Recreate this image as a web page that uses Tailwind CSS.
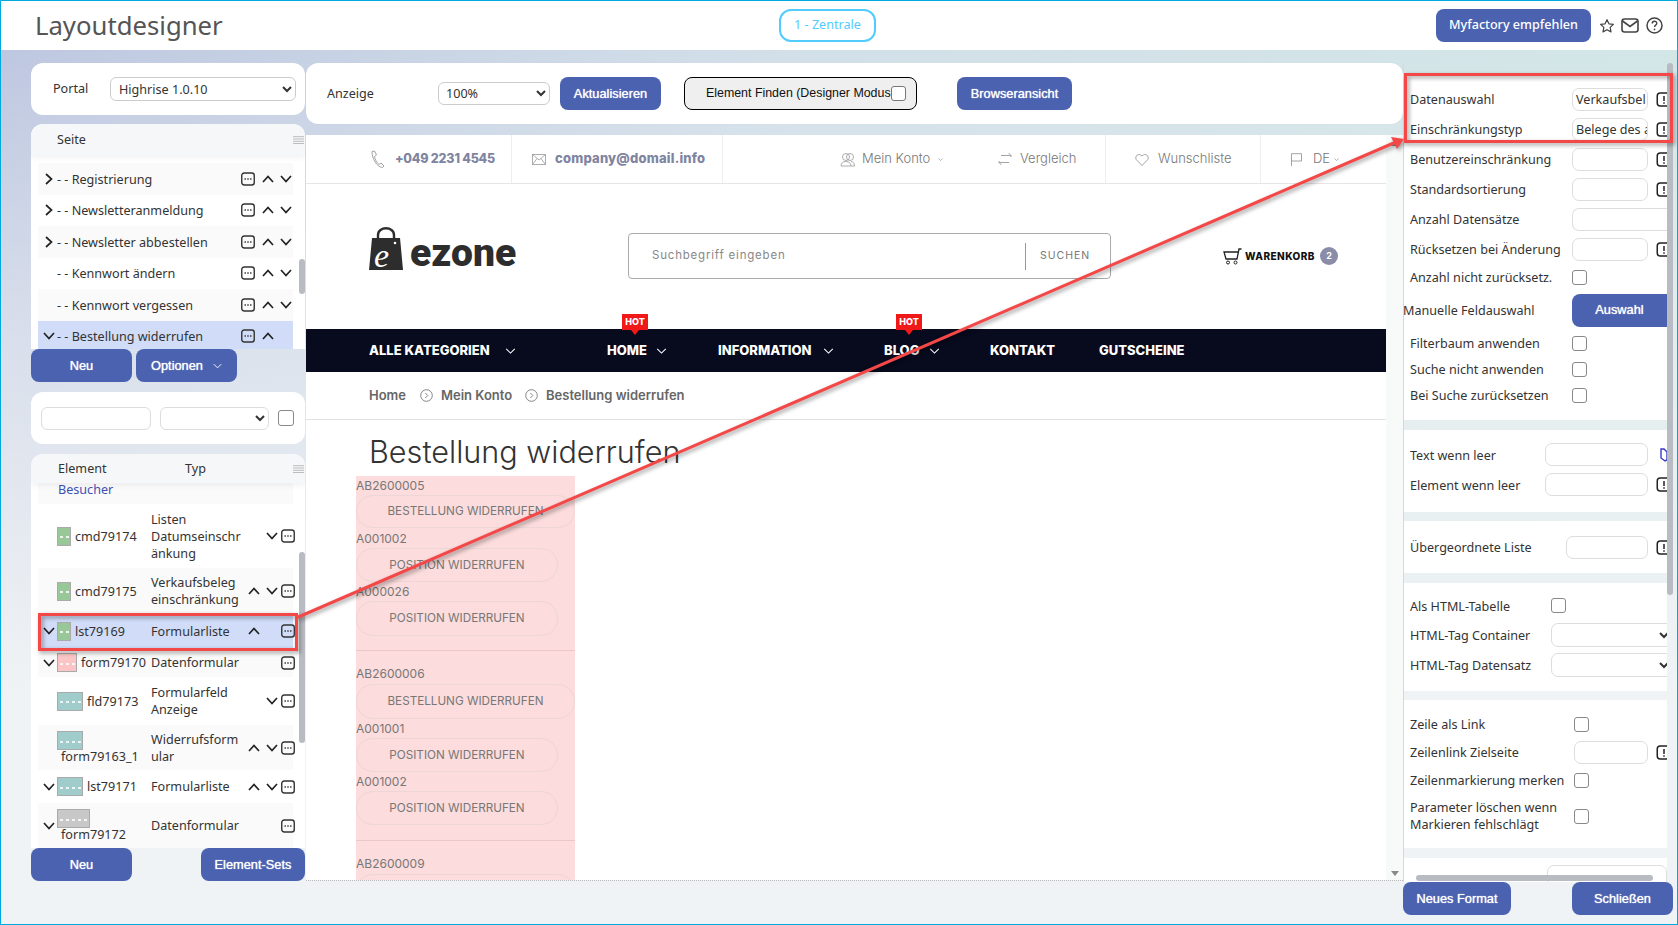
<!DOCTYPE html>
<html lang="de">
<head>
<meta charset="utf-8">
<title>Layoutdesigner</title>
<script src="https://cdn.jsdelivr.net/npm/@tailwindcss/browser@4"></script>
</head>
<body class="relative w-[1678px] h-[925px] overflow-hidden border border-[#00a8e0] font-['Noto_Sans',sans-serif] text-[12.6px] text-[#333] bg-[linear-gradient(to_bottom,rgba(240,243,245,0)_0%,rgba(240,243,245,0.55)_35%,#f0f3f5_75%),linear-gradient(to_right,#b9c3de_0%,#cfdde8_45%,#d0e5e5_100%)]">
<svg class="absolute w-0 h-0">
  <defs>
    <symbol id="up" viewBox="0 0 12 8"><path d="M1 7 6 1.5 11 7" fill="none" stroke="#222" stroke-width="1.7"/></symbol>
    <symbol id="down" viewBox="0 0 12 8"><path d="M1 1 6 6.5 11 1" fill="none" stroke="#222" stroke-width="1.7"/></symbol>
    <symbol id="right" viewBox="0 0 8 12"><path d="M1 1 6.5 6 1 11" fill="none" stroke="#222" stroke-width="1.7"/></symbol>
    <symbol id="dots" viewBox="0 0 14 14"><rect x=".75" y="1" width="12.5" height="12" rx="2.5" fill="none" stroke="#333" stroke-width="1.4"/><path d="M3.5 7h1.4M6.3 7h1.4M9.1 7h1.4" stroke="#333" stroke-width="1.5"/></symbol>
    <symbol id="bang" viewBox="0 0 14 15"><rect x=".75" y="1" width="14" height="13" rx="3" fill="none" stroke="#222" stroke-width="1.5"/><path d="M7.5 4v5M7.5 10.2v1.6" stroke="#222" stroke-width="1.5"/></symbol>
    <symbol id="menu" viewBox="0 0 11 8"><path d="M0 .7h11M0 3h11M0 5.3h11M0 7.500h11" stroke="#bcbcbc" stroke-width="1"/></symbol>
    <symbol id="navdown" viewBox="0 0 12 7"><path d="M1 1 6 6 11 1" fill="none" stroke="#fff" stroke-width="1.200"/></symbol>
    <symbol id="crumb" viewBox="0 0 13 13"><circle cx="6.500" cy="6.500" r="5.800" fill="none" stroke="#777" stroke-width=".9"/><path d="M5.300 4 7.800 6.500 5.300 9" fill="none" stroke="#777" stroke-width=".9"/></symbol>
  </defs>
</svg>

<header class="flex items-center h-[49px] bg-white pl-[34px]">
  <h1 class="w-[744px] text-[25.7px] leading-none text-[#555] font-normal">Layoutdesigner</h1>
  <div class="flex items-center justify-center w-[97px] h-[33px] rounded-[12px] border-2 border-[#52ccff] text-[#52ccff] text-[12.6px]">1 - Zentrale</div>
  <button class="ml-[560px] w-[155px] h-[33px] rounded-[8px] bg-[#4a62b0] text-white text-[12.6px] font-medium">Myfactory empfehlen</button>
  <svg class="ml-[8px] w-[16px] h-[16px]" viewBox="0 0 24 24"><path d="M12 2.500l2.900 6.200 6.700.8-4.900 4.600 1.300 6.700L12 17.500l-6 3.300 1.300-6.700L2.400 9.500l6.700-.8z" fill="none" stroke="#444" stroke-width="1.800" stroke-linejoin="round"/></svg>
  <svg class="ml-[6px] w-[18px] h-[15px]" viewBox="0 0 18 15"><rect x="1" y="1" width="16" height="13" rx="2.500" fill="none" stroke="#444" stroke-width="1.600"/><path d="M1.500 3 9 8.500 16.500 3" fill="none" stroke="#444" stroke-width="1.600"/></svg>
  <svg class="ml-[7px] w-[17px] h-[17px]" viewBox="0 0 17 17"><circle cx="8.500" cy="8.500" r="7.500" fill="none" stroke="#444" stroke-width="1.500"/><path d="M6.200 6.500c0-3 4.600-3 4.600-.2 0 1.900-2.300 1.800-2.300 3.700" fill="none" stroke="#444" stroke-width="1.400"/><circle cx="8.500" cy="12.400" r=".9" fill="#444"/></svg>
</header>

<main class="flex pl-[30px] pt-[13px]">
  <!-- linke Spalte -->
  <aside class="w-[274px] mr-px flex flex-col">
    <div class="flex items-center h-[52px] bg-white rounded-[12px] pl-[22px]">
      <span class="w-[57px]">Portal</span>
      <select class="w-[186px] h-[24px] pl-[4px] border border-[#ccc] rounded-[6px] bg-white text-[12.6px] text-[#333]"><option>Highrise 1.0.10</option></select>
    </div>

    <div class="mt-[9px] h-[225px] bg-white rounded-t-[12px] flex flex-col overflow-hidden">
      <div class="relative z-10 flex items-center h-[31px] bg-[#f6f7f8] shadow-[0_3px_5px_rgba(0,0,0,0.05)] pl-[26px] pr-[1px] shrink-0">
        <span class="flex-1 pt-[2px]">Seite</span>
        <svg class="w-[11px] h-[8px]"><use href="#menu"/></svg>
      </div>
      <div class="flex flex-1 min-h-0">
        <div class="ml-[7px] w-[255px] pt-[8px] bg-white overflow-hidden">
          <div class="flex items-center h-[31.500px] bg-[#fafafa]"><span class="w-[19px] pl-[7px]"><svg class="w-[8px] h-[12px]"><use href="#right"/></svg></span><span class="w-[184px] whitespace-nowrap pt-[3px]">- - Registrierung</span><svg class="w-[14px] h-[14px]"><use href="#dots"/></svg><svg class="ml-[7px] w-[12px] h-[8px]"><use href="#up"/></svg><svg class="ml-[6px] w-[12px] h-[8px]"><use href="#down"/></svg></div>
          <div class="flex items-center h-[31.500px]"><span class="w-[19px] pl-[7px]"><svg class="w-[8px] h-[12px]"><use href="#right"/></svg></span><span class="w-[184px] whitespace-nowrap pt-[3px]">- - Newsletteranmeldung</span><svg class="w-[14px] h-[14px]"><use href="#dots"/></svg><svg class="ml-[7px] w-[12px] h-[8px]"><use href="#up"/></svg><svg class="ml-[6px] w-[12px] h-[8px]"><use href="#down"/></svg></div>
          <div class="flex items-center h-[31.500px] bg-[#fafafa]"><span class="w-[19px] pl-[7px]"><svg class="w-[8px] h-[12px]"><use href="#right"/></svg></span><span class="w-[184px] whitespace-nowrap pt-[3px]">- - Newsletter abbestellen</span><svg class="w-[14px] h-[14px]"><use href="#dots"/></svg><svg class="ml-[7px] w-[12px] h-[8px]"><use href="#up"/></svg><svg class="ml-[6px] w-[12px] h-[8px]"><use href="#down"/></svg></div>
          <div class="flex items-center h-[31.500px]"><span class="w-[19px]"></span><span class="w-[184px] whitespace-nowrap pt-[3px]">- - Kennwort ändern</span><svg class="w-[14px] h-[14px]"><use href="#dots"/></svg><svg class="ml-[7px] w-[12px] h-[8px]"><use href="#up"/></svg><svg class="ml-[6px] w-[12px] h-[8px]"><use href="#down"/></svg></div>
          <div class="flex items-center h-[31.500px] bg-[#fafafa]"><span class="w-[19px]"></span><span class="w-[184px] whitespace-nowrap pt-[3px]">- - Kennwort vergessen</span><svg class="w-[14px] h-[14px]"><use href="#dots"/></svg><svg class="ml-[7px] w-[12px] h-[8px]"><use href="#up"/></svg><svg class="ml-[6px] w-[12px] h-[8px]"><use href="#down"/></svg></div>
          <div class="flex items-center h-[31.500px] bg-[#d0dcf8]"><span class="w-[19px] pl-[5px]"><svg class="w-[12px] h-[8px]"><use href="#down"/></svg></span><span class="w-[184px] whitespace-nowrap pt-[3px]">- - Bestellung widerrufen</span><svg class="w-[14px] h-[14px]"><use href="#dots"/></svg><svg class="ml-[7px] w-[12px] h-[8px]"><use href="#up"/></svg></div>
        </div>
        <div class="ml-[6px] w-[6px]"><div class="mt-[104px] h-[35px] rounded-[3px] bg-[#b8bcc2]"></div></div>
      </div>
    </div>
    <div class="flex gap-[4px]">
      <button class="w-[101px] h-[33px] rounded-[8px] bg-[#4a62b0] text-white font-['Liberation_Sans',sans-serif] text-[12.8px] [text-shadow:0_0_1px_#fff]">Neu</button>
      <button class="flex items-center justify-center gap-[10px] w-[101px] h-[33px] rounded-[8px] bg-[#4a62b0] text-white font-['Liberation_Sans',sans-serif] text-[12.8px] [text-shadow:0_0_1px_#fff]">Optionen <svg class="w-[9px] h-[6px]"><use href="#navdown"/></svg></button>
    </div>

    <div class="mt-[10px] flex items-center h-[52px] bg-white rounded-[12px] pl-[10px]">
      <input class="w-[110px] h-[23px] border border-[#ddd] rounded-[6px] bg-white">
      <select class="ml-[9px] w-[109px] h-[23px] border border-[#ddd] rounded-[6px] bg-white"><option></option></select>
      <input type="checkbox" class="ml-[9px] appearance-none w-[16px] h-[16px] border border-[#888] rounded-[3px] bg-white">
    </div>

    <div class="mt-[10px] h-[394px] bg-white rounded-t-[12px] flex flex-col overflow-hidden">
      <div class="relative z-10 flex items-center h-[29px] bg-[#f6f7f8] shadow-[0_3px_5px_rgba(0,0,0,0.05)] pl-[27px] pr-[1px] shrink-0">
        <span class="w-[127px] pt-[2px]">Element</span><span class="flex-1 pt-[2px]">Typ</span>
        <svg class="w-[11px] h-[8px]"><use href="#menu"/></svg>
      </div>
      <div class="flex flex-1 min-h-0">
        <div class="ml-[7px] w-[255px] leading-[17px] [&>div>*]:shrink-0">
          <div class="h-[21px] bg-[#fafafa] pl-[20px] text-[#4050b0] leading-[14px]">Besucher</div>
          <div class="flex items-center h-[64px]">
            <span class="w-[19px]"></span>
            <span class="w-[94px] flex items-center gap-[4px]"><span class="flex items-center justify-center w-[14px] h-[19px] bg-[#98c898] border border-[#aaa]"><span class="w-[9px] h-[2px] mt-[2px] bg-[repeating-linear-gradient(to_right,rgba(255,255,255,0.8)_0_3px,transparent_3px_6px)]"></span></span>cmd79174</span>
            <span class="w-[97px]">Listen<br>Datumseinschr<br>änkung</span>
            <span class="w-[18px]"></span>
            <svg class="w-[12px] h-[8px]"><use href="#down"/></svg><svg class="ml-[3px] w-[14px] h-[14px]"><use href="#dots"/></svg>
          </div>
          <div class="flex items-center h-[46px] bg-[#fafafa]">
            <span class="w-[19px]"></span>
            <span class="w-[94px] flex items-center gap-[4px]"><span class="flex items-center justify-center w-[14px] h-[19px] bg-[#98c898] border border-[#aaa]"><span class="w-[9px] h-[2px] mt-[2px] bg-[repeating-linear-gradient(to_right,rgba(255,255,255,0.8)_0_3px,transparent_3px_6px)]"></span></span>cmd79175</span>
            <span class="w-[97px]">Verkaufsbeleg einschränkung</span>
            <svg class="w-[12px] h-[8px]"><use href="#up"/></svg><span class="w-[6px]"></span><svg class="w-[12px] h-[8px]"><use href="#down"/></svg><svg class="ml-[3px] w-[14px] h-[14px]"><use href="#dots"/></svg>
          </div>
          <div class="flex items-center h-[34px] bg-[#d0dcf8]">
            <span class="w-[19px] pl-[5px]"><svg class="w-[12px] h-[8px]"><use href="#down"/></svg></span>
            <span class="w-[94px] flex items-center gap-[4px]"><span class="flex items-center justify-center w-[14px] h-[19px] bg-[#98c898] border border-[#aaa]"><span class="w-[9px] h-[2px] mt-[2px] bg-[repeating-linear-gradient(to_right,rgba(255,255,255,0.8)_0_3px,transparent_3px_6px)]"></span></span>lst79169</span>
            <span class="w-[97px]">Formularliste</span>
            <svg class="w-[12px] h-[8px]"><use href="#up"/></svg><span class="w-[21px]"></span><svg class="w-[14px] h-[14px]"><use href="#dots"/></svg>
          </div>
          <div class="flex items-center h-[29px] bg-[#fafafa]">
            <span class="w-[19px] pl-[5px]"><svg class="w-[12px] h-[8px]"><use href="#down"/></svg></span>
            <span class="w-[94px] flex items-center gap-[4px]"><span class="flex items-center justify-center w-[20px] h-[19px] bg-[#fbc5c5] border border-[#aaa]"><span class="w-[15px] h-[2px] mt-[2px] bg-[repeating-linear-gradient(to_right,rgba(255,255,255,0.8)_0_3px,transparent_3px_6px)]"></span></span>form79170</span>
            <span class="w-[97px]">Datenformular</span>
            <span class="w-[33px]"></span><svg class="w-[14px] h-[14px]"><use href="#dots"/></svg>
          </div>
          <div class="flex items-center h-[48px]">
            <span class="w-[19px]"></span>
            <span class="w-[94px] flex items-center gap-[4px]"><span class="flex items-center justify-center w-[26px] h-[19px] bg-[#a0cccc] border border-[#aaa]"><span class="w-[21px] h-[2px] mt-[2px] bg-[repeating-linear-gradient(to_right,rgba(255,255,255,0.8)_0_3px,transparent_3px_6px)]"></span></span>fld79173</span>
            <span class="w-[97px]">Formularfeld Anzeige</span>
            <span class="w-[18px]"></span>
            <svg class="w-[12px] h-[8px]"><use href="#down"/></svg><svg class="ml-[3px] w-[14px] h-[14px]"><use href="#dots"/></svg>
          </div>
          <div class="flex items-center h-[45px] bg-[#fafafa]">
            <span class="w-[19px]"></span>
            <span class="w-[94px]"><span class="flex items-center justify-center w-[26px] h-[19px] bg-[#a0cccc] border border-[#aaa]"><span class="w-[21px] h-[2px] mt-[2px] bg-[repeating-linear-gradient(to_right,rgba(255,255,255,0.8)_0_3px,transparent_3px_6px)]"></span></span><span class="block pl-[4px] leading-[14px]">form79163_1</span></span>
            <span class="w-[97px]">Widerrufsform<br>ular</span>
            <svg class="w-[12px] h-[8px]"><use href="#up"/></svg><span class="w-[6px]"></span><svg class="w-[12px] h-[8px]"><use href="#down"/></svg><svg class="ml-[3px] w-[14px] h-[14px]"><use href="#dots"/></svg>
          </div>
          <div class="flex items-center h-[33px]">
            <span class="w-[19px] pl-[5px]"><svg class="w-[12px] h-[8px]"><use href="#down"/></svg></span>
            <span class="w-[94px] flex items-center gap-[4px]"><span class="flex items-center justify-center w-[26px] h-[19px] bg-[#a0cccc] border border-[#aaa]"><span class="w-[21px] h-[2px] mt-[2px] bg-[repeating-linear-gradient(to_right,rgba(255,255,255,0.8)_0_3px,transparent_3px_6px)]"></span></span>lst79171</span>
            <span class="w-[97px]">Formularliste</span>
            <svg class="w-[12px] h-[8px]"><use href="#up"/></svg><span class="w-[6px]"></span><svg class="w-[12px] h-[8px]"><use href="#down"/></svg><svg class="ml-[3px] w-[14px] h-[14px]"><use href="#dots"/></svg>
          </div>
          <div class="flex items-center h-[45px] bg-[#fafafa]">
            <span class="w-[19px] pl-[5px]"><svg class="w-[12px] h-[8px]"><use href="#down"/></svg></span>
            <span class="w-[94px]"><span class="flex items-center justify-center w-[33px] h-[19px] bg-[#c8c8c8] border border-[#aaa]"><span class="w-[28px] h-[2px] mt-[2px] bg-[repeating-linear-gradient(to_right,rgba(255,255,255,0.8)_0_3px,transparent_3px_6px)]"></span></span><span class="block pl-[4px] leading-[14px]">form79172</span></span>
            <span class="w-[97px]">Datenformular</span>
            <span class="w-[33px]"></span><svg class="w-[14px] h-[14px]"><use href="#dots"/></svg>
          </div>
        </div>
        <div class="ml-[6px] w-[6px]"><div class="mt-[69px] h-[191px] rounded-[3px] bg-[#b8bcc2]"></div></div>
      </div>
    </div>
    <div class="flex justify-between">
      <button class="w-[101px] h-[33px] rounded-[8px] bg-[#4a62b0] text-white font-['Liberation_Sans',sans-serif] text-[12.8px] [text-shadow:0_0_1px_#fff]">Neu</button>
      <button class="w-[104px] h-[33px] rounded-[8px] bg-[#4a62b0] text-white font-['Liberation_Sans',sans-serif] text-[12.8px] [text-shadow:0_0_1px_#fff]">Element-Sets</button>
    </div>
  </aside>

  <!-- Mitte -->
  <section class="w-[1097px] flex flex-col">
    <div class="flex items-center h-[61px] bg-white rounded-[12px] pl-[21px] shadow-[0_0_1px_rgba(0,0,0,0.1)]">
      <span class="w-[111px] pt-[2px]">Anzeige</span>
      <select class="w-[112px] h-[23px] pl-[3px] border border-[#ccc] rounded-[6px] bg-white text-[12.6px]"><option>100%</option></select>
      <button class="ml-[10px] w-[101px] h-[33px] rounded-[8px] bg-[#4a62b0] text-white font-['Liberation_Sans',sans-serif] text-[12.8px] [text-shadow:0_0_1px_#fff]">Aktualisieren</button>
      <div class="ml-[23px] flex items-center w-[233px] h-[33px] pl-[21px] border border-black rounded-[8px] bg-[#efefef] font-['Liberation_Sans',sans-serif] whitespace-nowrap text-[12.4px] text-[#111]">
        <span class="w-[185px] shrink-0">Element Finden (Designer Modus</span>
        <input type="checkbox" class="relative appearance-none w-[15px] h-[15px] border border-[#777] rounded-[3px] bg-white shrink-0">
      </div>
      <button class="ml-[40px] w-[115px] h-[33px] rounded-[8px] bg-[#4a62b0] text-white font-['Liberation_Sans',sans-serif] text-[12.8px] [text-shadow:0_0_1px_#fff]">Browseransicht</button>
    </div>

    <div class="mt-[11px] h-[746px] flex border-b border-dotted border-[#bbb]">
      <div class="w-[1080px] bg-white flex flex-col overflow-hidden font-['Inter',sans-serif] text-[#777d99]">
        <!-- Topbar -->
        <div class="flex items-stretch h-[49px] shrink-0 border-b border-[#e6e6e6] text-[13px]">
          <div class="flex items-center w-[206px] pl-[64px] border-r border-[#eee]">
            <svg class="w-[15px] h-[18px] mr-[10px]" viewBox="0 0 15 18"><path d="M2 1.500 4.500 1l2 4-2 1.500c.5 3 2 6 4.500 8L11 13l3 3-1.500 1.500C7 17 2 9 2 1.500z" fill="none" stroke="#999" stroke-width=".9"/></svg>
            <b class="text-[12.5px] font-extrabold whitespace-nowrap tracking-[-0.2px] text-[#7f84a0]">+049 2231 4545</b>
          </div>
          <div class="flex items-center w-[211px] pl-[20px] border-r border-[#eee]">
            <svg class="w-[14px] h-[11px] mr-[9px]" viewBox="0 0 14 11"><rect x=".5" y=".5" width="13" height="10" fill="none" stroke="#999" stroke-width=".8"/><path d="M.5.500 7 6l6.500-5.500M.5 10.500 5 4.500M13.500 10.500 9 4.500" fill="none" stroke="#999" stroke-width=".8"/></svg>
            <b class="font-extrabold whitespace-nowrap tracking-[0.2px] text-[#7f84a0]">company@domail.info</b>
          </div>
          <div class="flex items-center w-[383px] pl-[117px] border-r border-[#eee] text-[#777] font-light">
            <svg class="w-[15px] h-[15px] mr-[7px]" viewBox="0 0 15 15"><circle cx="6" cy="5" r="3.500" fill="none" stroke="#999" stroke-width=".8"/><circle cx="10" cy="5" r="3.500" fill="none" stroke="#999" stroke-width=".8"/><path d="M1 14c0-3 2-4.500 5-4.500s5 1.500 5 4.500zM11 9.500c2 0 3.500 1.500 3.500 4.500H11" fill="none" stroke="#999" stroke-width=".8"/></svg>
            <span class="w-[76px] whitespace-nowrap">Mein Konto</span>
            <svg class="w-[5px] h-[3px]" viewBox="0 0 12 7"><path d="M1 1 6 6 11 1" fill="none" stroke="#888" stroke-width="1.500"/></svg>
            <svg class="ml-[55px] w-[14px] h-[14px] mr-[8px]" viewBox="0 0 14 14"><path d="M3 3.500h10M13 3.500 10.500 1M13 3.500V5M11 10.500H1M1 10.500 3.500 13M1 10.500V9" fill="none" stroke="#999" stroke-width=".9"/></svg>
            <span class="whitespace-nowrap">Vergleich</span>
          </div>
          <div class="flex items-center w-[155px] pl-[29px] border-r border-[#eee] text-[#777] font-light">
            <svg class="w-[14px] h-[13px] mr-[9px]" viewBox="0 0 14 13"><path d="M7 12.500 1.200 6.500C-.5 3 3.500-.5 7 3c3.500-3.500 7.500 0 5.800 3.500z" fill="none" stroke="#999" stroke-width=".9"/></svg>
            <span class="whitespace-nowrap">Wunschliste</span>
          </div>
          <div class="flex items-center pl-[30px] text-[#777] font-light">
            <svg class="w-[11px] h-[13px] mr-[11px]" viewBox="0 0 11 13"><path d="M.5 13V.7h10V8H.5" fill="none" stroke="#999" stroke-width=".9"/></svg>
            <span class="w-[21px]">DE</span>
            <svg class="w-[5px] h-[3px]" viewBox="0 0 12 7"><path d="M1 1 6 6 11 1" fill="none" stroke="#888" stroke-width="1.500"/></svg>
          </div>
        </div>
        <!-- Logo und Suche -->
        <div class="flex h-[145px] shrink-0">
          <div class="ml-[63px] mt-[43px] flex w-[259px] h-[44px]">
            <svg class="w-[34px] h-[44px] shrink-0 overflow-visible" viewBox="0 0 34 44"><path d="M9 12V8c0-9 16-9 16 0v4" fill="none" stroke="#2d2d2d" stroke-width="2.400"/><path d="M3 11h28l3 32H0z" fill="#2d2d2d"/><circle cx="26" cy="16" r="1.300" fill="#fff"/><text x="5" y="40" font-size="34" font-style="italic" font-family="Liberation Serif" fill="#fff">e</text></svg>
            <span class="ml-[7px] mt-[8px] font-['Roboto',sans-serif] font-black text-[39px] leading-[36px] text-[#2d2d2d]">ezone</span>
          </div>
          <div class="mt-[49px] flex items-center w-[483px] h-[46px] pl-[23px] border border-[#aaa] rounded-[4px]">
            <span class="w-[373px] text-[11.500px] tracking-[0.8px] text-[#888]">Suchbegriff eingeben</span>
            <span class="h-[27px] border-l border-[#999] mr-[14px]"></span>
            <span class="text-[10.500px] tracking-[1px] text-[#777]">SUCHEN</span>
          </div>
          <div class="ml-[112px] mt-[62px] flex items-center h-[20px]">
            <svg class="w-[19px] h-[17px]" viewBox="0 0 19 17"><path d="M18.500 1H16l-2 10H3L1 4h14" fill="none" stroke="#222" stroke-width="1.300"/><circle cx="5" cy="14.500" r="1.500" fill="none" stroke="#222"/><circle cx="12.500" cy="14.500" r="1.500" fill="none" stroke="#222"/></svg>
            <b class="ml-[3px] w-[75px] text-[10px] font-extrabold text-[#111] tracking-[0.45px]">WARENKORB</b>
            <span class="flex items-center justify-center w-[18px] h-[18px] rounded-full bg-[#8a8ca8] text-white text-[9px] font-bold">2</span>
          </div>
        </div>
        <!-- Navigation -->
        <nav class="relative flex items-center h-[43px] shrink-0 bg-[#080a1e] text-white text-[13px] font-extrabold whitespace-nowrap">
          <span class="ml-[63px] w-[127px]">ALLE KATEGORIEN</span><svg class="ml-[9px] w-[11px] h-[6px]"><use href="#navdown"/></svg>
          <span class="ml-[91px] w-[40px]">HOME</span><svg class="ml-[9px] w-[11px] h-[6px]"><use href="#navdown"/></svg>
          <span class="ml-[51px] w-[96px]">INFORMATION</span><svg class="ml-[9px] w-[11px] h-[6px]"><use href="#navdown"/></svg>
          <span class="ml-[50px] w-[37px]">BLOG</span><svg class="ml-[8px] w-[11px] h-[6px]"><use href="#navdown"/></svg>
          <span class="ml-[50px] w-[66px]">KONTAKT</span>
          <span class="ml-[43px]">GUTSCHEINE</span>
          <span class="absolute left-[316px] top-[-15px] w-[26px] h-[16px] bg-[#f01818] text-white text-[9px] font-extrabold leading-[16px] text-center">HOT</span>
          <span class="absolute left-[325px] top-[1px] w-0 h-0 border-x-[4px] border-x-transparent border-t-[5px] border-t-[#f01818]"></span>
          <span class="absolute left-[590px] top-[-15px] w-[26px] h-[16px] bg-[#f01818] text-white text-[9px] font-extrabold leading-[16px] text-center">HOT</span>
          <span class="absolute left-[599px] top-[1px] w-0 h-0 border-x-[4px] border-x-transparent border-t-[5px] border-t-[#f01818]"></span>
        </nav>
        <!-- Brotkrumen -->
        <div class="flex items-center h-[48px] shrink-0 pl-[63px] border-b border-[#e2e2e2] text-[13px] font-semibold text-[#666] whitespace-nowrap">
          <span class="w-[38px]">Home</span>
          <svg class="ml-[13px] mr-[8px] w-[13px] h-[13px]"><use href="#crumb"/></svg>
          <span class="w-[71px]">Mein Konto</span>
          <svg class="ml-[13px] mr-[8px] w-[13px] h-[13px]"><use href="#crumb"/></svg>
          <span>Bestellung widerrufen</span>
        </div>
        <h2 class="flex items-center h-[56px] shrink-0 pl-[63px] pt-[8px] text-[30.600px] font-light text-[#333] whitespace-nowrap">Bestellung widerrufen</h2>
        <!-- Liste -->
        <div class="ml-[50px] w-[219px] flex-1 min-h-0 overflow-hidden bg-[#fcdcdc] text-[12px] text-[#777] leading-[19px] [&>.flex]:text-[11.7px]">
          <div class="h-[19px]">AB2600005</div>
          <div class="flex items-center justify-center h-[33px] rounded-[17px] border border-[#ecd6d6]">BESTELLUNG WIDERRUFEN</div>
          <div class="h-[20px] pt-px">A001002</div>
          <div class="flex items-center justify-center w-[202px] h-[34px] rounded-[17px] border border-[#ecd6d6]">POSITION WIDERRUFEN</div>
          <div class="h-[19px]">A000026</div>
          <div class="flex items-center justify-center w-[202px] h-[35px] rounded-[17px] border border-[#ecd6d6]">POSITION WIDERRUFEN</div>
          <div class="mt-[14px] border-t border-[#ebc8c8] pt-[13px] h-[34px]">AB2600006</div>
          <div class="flex items-center justify-center h-[35px] rounded-[17px] border border-[#ecd6d6]">BESTELLUNG WIDERRUFEN</div>
          <div class="h-[19px]">A001001</div>
          <div class="flex items-center justify-center w-[202px] h-[34px] rounded-[17px] border border-[#ecd6d6]">POSITION WIDERRUFEN</div>
          <div class="h-[19px]">A001002</div>
          <div class="flex items-center justify-center w-[202px] h-[34px] rounded-[17px] border border-[#ecd6d6]">POSITION WIDERRUFEN</div>
          <div class="mt-[15px] border-t border-[#ebc8c8] pt-[13px] h-[34px]">AB2600009</div>
          <div class="h-[35px] rounded-[17px] border border-[#ecd6d6]"></div>
        </div>
      </div>
      <div class="w-[17px] bg-[#f8f9f9] flex flex-col items-center justify-between pt-[6px] pb-[4px]">
        <span class="w-0 h-0 border-x-[4px] border-x-transparent border-b-[5px] border-b-[#888]"></span>
        <span class="w-0 h-0 border-x-[4px] border-x-transparent border-t-[5px] border-t-[#888]"></span>
      </div>
    </div>
  </section>

  <!-- rechte Spalte -->
  <aside class="w-[270px] flex flex-col">
    <div class="relative h-[819px] flex overflow-hidden">
      <div class="w-[264px] pt-[12px] flex flex-col gap-[9.500px] border-l border-[#c8dedd] overflow-hidden [&_span]:shrink-0">
        <div class="bg-white pt-[9px] pb-[12px] pl-[6px] whitespace-nowrap">
          <div class="flex items-center h-[30px]"><span class="w-[162px] pt-[3px]">Datenauswahl</span><span class="w-[76px] h-[23px] pl-[3px] leading-[21px] border border-[#ddd] rounded-[7px] overflow-hidden">Verkaufsbel</span><svg class="ml-[8px] w-[15px] h-[15px] shrink-0"><use href="#bang"/></svg></div>
          <div class="flex items-center h-[30px]"><span class="w-[162px] pt-[3px]">Einschränkungstyp</span><span class="w-[76px] h-[23px] pl-[3px] leading-[21px] border border-[#ddd] rounded-[7px] overflow-hidden">Belege des a</span><svg class="ml-[8px] w-[15px] h-[15px] shrink-0"><use href="#bang"/></svg></div>
          <div class="flex items-center h-[30px]"><span class="w-[162px] pt-[3px]">Benutzereinschränkung</span><span class="w-[76px] h-[23px] border border-[#ddd] rounded-[7px]"></span><svg class="ml-[8px] w-[15px] h-[15px] shrink-0"><use href="#bang"/></svg></div>
          <div class="flex items-center h-[30px]"><span class="w-[162px] pt-[3px]">Standardsortierung</span><span class="w-[76px] h-[23px] border border-[#ddd] rounded-[7px]"></span><svg class="ml-[8px] w-[15px] h-[15px] shrink-0"><use href="#bang"/></svg></div>
          <div class="flex items-center h-[30px]"><span class="w-[162px] pt-[3px]">Anzahl Datensätze</span><span class="w-[100px] h-[23px] border border-[#ddd] rounded-l-[7px] border-r-0"></span></div>
          <div class="flex items-center h-[30px]"><span class="w-[162px] pt-[3px]">Rücksetzen bei Änderung</span><span class="w-[76px] h-[23px] border border-[#ddd] rounded-[7px]"></span><svg class="ml-[8px] w-[15px] h-[15px] shrink-0"><use href="#bang"/></svg></div>
          <div class="flex items-center h-[26px]"><span class="w-[162px] pt-[3px]">Anzahl nicht zurücksetz.</span><input type="checkbox" class="appearance-none w-[15px] h-[15px] border border-[#888] rounded-[3px] bg-white"></div>
          <div class="flex items-center h-[40px]"><span class="w-[162px] pt-[3px] ml-[-7px] mr-[7px]">Manuelle Feldauswahl</span><button class="w-[100px] h-[33px] rounded-l-[8px] bg-[#4a62b0] text-white font-['Liberation_Sans',sans-serif] text-[12.8px] [text-shadow:0_0_1px_#fff]">Auswahl</button></div>
          <div class="flex items-center h-[26px]"><span class="w-[162px] pt-[3px]">Filterbaum anwenden</span><input type="checkbox" class="appearance-none w-[15px] h-[15px] border border-[#888] rounded-[3px] bg-white"></div>
          <div class="flex items-center h-[26px]"><span class="w-[162px] pt-[3px]">Suche nicht anwenden</span><input type="checkbox" class="appearance-none w-[15px] h-[15px] border border-[#888] rounded-[3px] bg-white"></div>
          <div class="flex items-center h-[26px]"><span class="w-[162px] pt-[3px]">Bei Suche zurücksetzen</span><input type="checkbox" class="appearance-none w-[15px] h-[15px] border border-[#888] rounded-[3px] bg-white"></div>
        </div>
        <div class="bg-white pt-[10px] pb-[12px] pl-[6px] whitespace-nowrap">
          <div class="flex items-center h-[30px]"><span class="w-[135px] pt-[3px]">Text wenn leer</span><span class="w-[103px] h-[23px] border border-[#ddd] rounded-[7px]"></span><svg class="ml-[12px] w-[8px] h-[14px] shrink-0" viewBox="0 0 8 14"><path d="M1 1h3l3 3v8l-2 1-4-3z" fill="none" stroke="#3a3ac8" stroke-width="1.400"/></svg></div>
          <div class="flex items-center h-[30px]"><span class="w-[135px] pt-[3px]">Element wenn leer</span><span class="w-[103px] h-[23px] border border-[#ddd] rounded-[7px]"></span><svg class="ml-[8px] w-[15px] h-[15px] shrink-0"><use href="#bang"/></svg></div>
        </div>
        <div class="bg-white pt-[11px] pb-[11px] pl-[6px] whitespace-nowrap">
          <div class="flex items-center h-[30px]"><span class="w-[156px] pt-[3px]">Übergeordnete Liste</span><span class="w-[82px] h-[23px] border border-[#ddd] rounded-[7px]"></span><svg class="ml-[8px] w-[15px] h-[15px] shrink-0"><use href="#bang"/></svg></div>
        </div>
        <div class="bg-white pt-[9px] pb-[11px] pl-[6px] whitespace-nowrap">
          <div class="flex items-center h-[28px]"><span class="w-[141px] pt-[3px]">Als HTML-Tabelle</span><input type="checkbox" class="appearance-none w-[15px] h-[15px] border border-[#888] rounded-[3px] bg-white"></div>
          <div class="flex items-center h-[30px]"><span class="w-[141px] pt-[3px]">HTML-Tag Container</span><select class="w-[122px] h-[24px] border border-[#ddd] rounded-[7px] bg-white shrink-0"><option></option></select></div>
          <div class="flex items-center h-[30px]"><span class="w-[141px] pt-[3px]">HTML-Tag Datensatz</span><select class="w-[122px] h-[24px] border border-[#ddd] rounded-[7px] bg-white shrink-0"><option></option></select></div>
        </div>
        <div class="bg-white pt-[10px] pb-[10px] pl-[6px] whitespace-nowrap">
          <div class="flex items-center h-[28px]"><span class="w-[164px] pt-[3px]">Zeile als Link</span><input type="checkbox" class="appearance-none w-[15px] h-[15px] border border-[#888] rounded-[3px] bg-white"></div>
          <div class="flex items-center h-[28px]"><span class="w-[164px] pt-[3px]">Zeilenlink Zielseite</span><span class="w-[74px] h-[23px] border border-[#ddd] rounded-[7px]"></span><svg class="ml-[8px] w-[15px] h-[15px] shrink-0"><use href="#bang"/></svg></div>
          <div class="flex items-center h-[28px]"><span class="w-[164px] pt-[3px]">Zeilenmarkierung merken</span><input type="checkbox" class="appearance-none w-[15px] h-[15px] border border-[#888] rounded-[3px] bg-white"></div>
          <div class="flex items-center h-[44px]"><span class="w-[164px] leading-[17px]">Parameter löschen wenn<br>Markieren fehlschlägt</span><input type="checkbox" class="appearance-none w-[15px] h-[15px] border border-[#888] rounded-[3px] bg-white"></div>
        </div>
        <div class="bg-white pt-[7px] pl-[143px] flex-1"><span class="block w-[120px] h-[23px] border border-[#ddd] rounded-[7px]"></span></div>
      </div>
      <div class="w-[6px]"><div class="h-[532px] rounded-[3px] bg-[#b8bcc2]"></div></div>
      <div class="absolute left-[13px] bottom-[1px] w-[237px] h-[6px] rounded-[3px] bg-[#b8bcc2]"></div>
    </div>
    <div class="flex justify-between">
      <button class="w-[108px] h-[33px] rounded-[8px] bg-[#4a62b0] text-white font-['Liberation_Sans',sans-serif] text-[12.8px] [text-shadow:0_0_1px_#fff]">Neues Format</button>
      <button class="w-[101px] h-[33px] rounded-[8px] bg-[#4a62b0] text-white font-['Liberation_Sans',sans-serif] text-[12.8px] [text-shadow:0_0_1px_#fff]">Schließen</button>
    </div>
  </aside>
</main>

<!-- rote Markierung (liegt über dem Inhalt) -->
<svg class="absolute left-[-1px] top-[-1px] w-[1678px] h-[925px] pointer-events-none drop-shadow-[2px_2px_2px_rgba(0,0,0,0.4)]" viewBox="0 0 1678 925">
  <rect x="39.500" y="614.500" width="257" height="35" fill="none" stroke="#f44848" stroke-width="3"/>
  <rect x="1405.500" y="74.500" width="266" height="67" fill="none" stroke="#f44848" stroke-width="3"/>
  <path d="M296 618 1396 142" stroke="#f44848" stroke-width="3" fill="none"/>
  <path d="M1404 139 1391 137 1397 149z" fill="#f44848"/>
</svg>
</body>
</html>
